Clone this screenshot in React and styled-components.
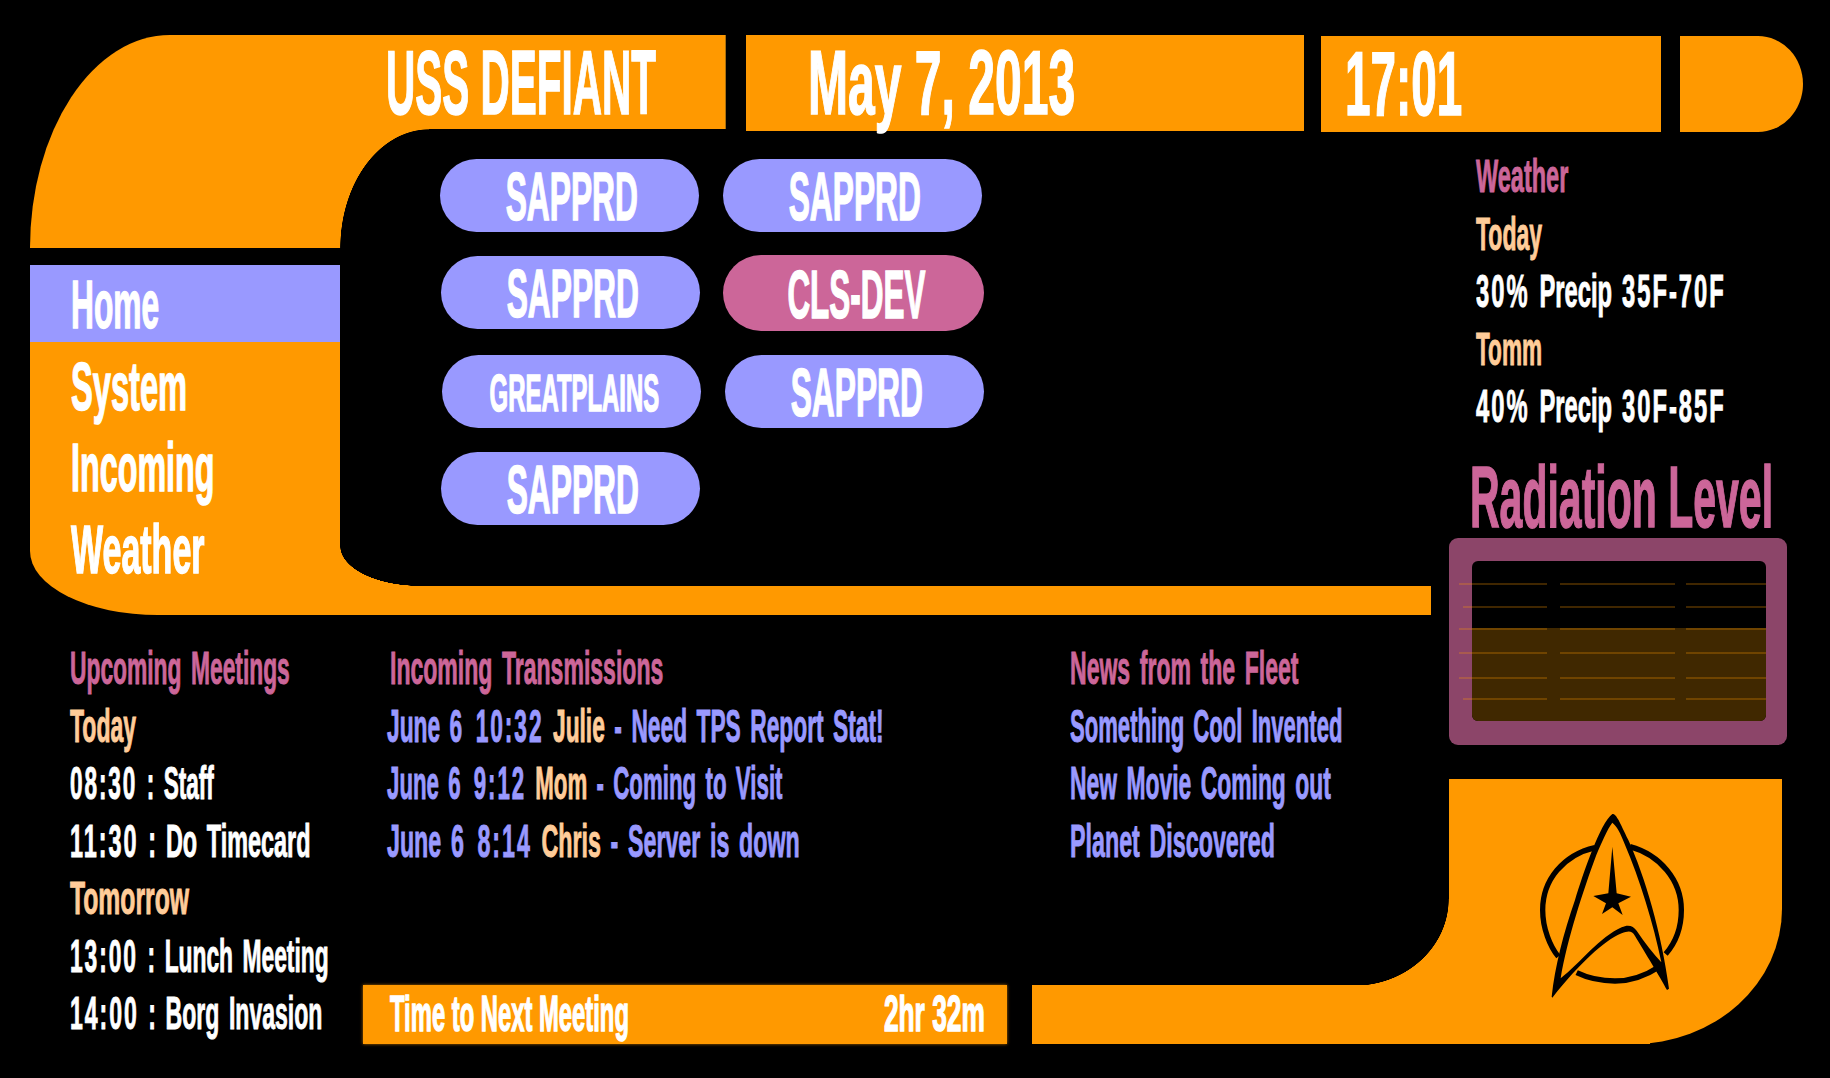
import React from 'react';
import styled, { createGlobalStyle } from 'styled-components';

const ORANGE = '#ff9900';
const PINK = '#cc6699';
const LAVENDER = '#9999ff';
const PEACH = '#ffcc99';

const GlobalStyle = createGlobalStyle`
  html, body {
    margin: 0;
    background: #000;
  }
  * {
    box-sizing: border-box;
  }
`;

const Page = styled.div`
  width: 1830px;
  height: 1078px;
  overflow: hidden;
  background: #000;
  padding: 35px 0 0 30px;
  display: grid;
  grid-template-columns: 310px 1109px 1fr;
  grid-template-rows: 97px 483px 429px;
  font-family: "Liberation Sans", Arial, sans-serif;
  font-weight: 700;
  color: #fff;
`;

// the whole screen uses one very condensed face, so text gets squeezed sideways
const Squeezed = styled.span`
  display: inline-block;
  white-space: nowrap;
  font-size: ${p => p.$size}px;
  -webkit-text-stroke: 1.5px currentColor;
  transform: scaleX(${p => p.$sx});
  transform-origin: ${p => p.$origin || 'left'} center;
`;

const Rail = styled.div`
  grid-column: 1;
  grid-row: 1 / span 2;
  display: flex;
  flex-direction: column;
  gap: 17px;
`;

const RailCap = styled.div`
  position: relative;
  height: 213px;
  background: ${ORANGE};
  border-top-left-radius: 140px 213px;

  &::after {
    content: '';
    position: absolute;
    left: 100%;
    top: 94px;
    width: 89px;
    height: 119px;
    background: radial-gradient(89px 119px at 100% 100%, transparent 99.4%, ${ORANGE} 100%);
  }
`;

const Nav = styled.nav`
  position: relative;
  height: 350px;
  background: ${ORANGE};
  border-bottom-left-radius: 128px 64px;
  display: flex;
  flex-direction: column;
  gap: 4.5px;

  &::after {
    content: '';
    position: absolute;
    left: 100%;
    bottom: 29px;
    width: 80px;
    height: 40px;
    background: radial-gradient(80px 40px at 100% 0, transparent 99.4%, ${ORANGE} 100%);
  }
`;

const NavItem = styled.div`
  height: 77px;
  line-height: 78px;
  padding-left: 41px;
  background: ${p => (p.$active ? LAVENDER : 'transparent')};
`;

const Header = styled.header`
  grid-column: 2 / span 2;
  grid-row: 1;
  display: flex;
  align-items: flex-start;
`;

const HeaderBar = styled.div`
  width: ${p => p.$width}px;
  height: ${p => p.$height}px;
  margin: ${p => p.$top || 0}px ${p => p.$gap || 0}px 0 0;
  padding-left: ${p => p.$pad || 0}px;
  background: ${ORANGE};
  line-height: 96px;
`;

const TitleBar = styled(HeaderBar)`
  border-right: 1px solid #a86e0c;
`;

const EndCap = styled.div`
  width: 123px;
  height: 96px;
  margin-top: 1px;
  background: ${ORANGE};
  border-top-right-radius: 45px 48px;
  border-bottom-right-radius: 45px 48px;
`;

const Main = styled.main`
  grid-column: 2;
  grid-row: 2;
  display: flex;
  flex-direction: column;
  padding-top: 27px;
`;

const ServerGrid = styled.div`
  display: grid;
  grid-template-columns: 259px 259px;
  column-gap: 24px;
  row-gap: 24px;
  padding-left: 100px;
  align-items: start;
`;

const Pill = styled.div`
  width: ${p => (p.$alert ? 261 : 259)}px;
  height: ${p => (p.$alert ? 76 : 73)}px;
  margin: ${p => p.$dy || 0}px 0 ${p => (p.$alert ? -2 : 0)}px ${p => p.$dx || 0}px;
  padding: 2px 0 0 5px;
  border-radius: 38px;
  background: ${p => (p.$alert ? PINK : LAVENDER)};
  display: flex;
  align-items: center;
  justify-content: center;
`;

const BottomBar = styled.div`
  margin-top: auto;
  width: 1091px;
  height: 29px;
  background: ${ORANGE};
`;

const Side = styled.aside`
  grid-column: 3;
  grid-row: 2 / span 2;
  display: flex;
  flex-direction: column;
  align-items: flex-start;
`;

const SideList = styled.div`
  flex: none;
  padding: 15px 0 1px 27px;
`;

const Line = styled.div`
  height: 57.5px;
  line-height: 57.5px;
  margin-left: ${p => p.$indent || 0}px;
  font-size: 47px;
  word-spacing: 0.14em;
  white-space: nowrap;
  -webkit-text-stroke: 1px currentColor;
  color: ${p => p.$tone || '#fff'};
  transform: scaleX(${p => p.$sx || 0.49});
  transform-origin: left center;
`;

const Peach = styled.span`
  color: ${PEACH};
`;

// digits run wider than letters on this screen
const Num = styled.span`
  letter-spacing: 0.085em;
`;

const RadiationTitle = styled.div`
  flex: none;
  height: 83px;
  margin-top: 19px;
  padding-left: 21px;
  line-height: 84px;
  color: ${PINK};
`;

const RadiationFrame = styled.div`
  position: relative;
  flex: none;
  width: 338px;
  height: 207px;
  padding: 23px 21px 24px 23px;
  background: #8c4569;
  border-radius: 9px;
`;

const RadiationWell = styled.div`
  height: 100%;
  border-radius: 6px;
  overflow: hidden;
  background: #000;
  display: flex;
  flex-direction: column;
  justify-content: flex-end;
`;

const RadiationFill = styled.div`
  background: #402800;
`;

const Tick = styled.div`
  position: absolute;
  left: ${p => p.$left}px;
  right: 21px;
  height: 2px;
  background: linear-gradient(
    to right,
    rgba(255, 153, 0, 0.25) ${p => 98 - p.$left}px,
    transparent ${p => 98 - p.$left}px,
    transparent ${p => 111 - p.$left}px,
    rgba(255, 153, 0, 0.25) ${p => 111 - p.$left}px,
    rgba(255, 153, 0, 0.25) ${p => 226 - p.$left}px,
    transparent ${p => 226 - p.$left}px,
    transparent ${p => 237 - p.$left}px,
    rgba(255, 153, 0, 0.25) ${p => 237 - p.$left}px
  );
`;

const Elbow = styled.div`
  position: relative;
  flex: none;
  width: 333px;
  height: 265px;
  margin-top: 34px;
  padding: 21px 0 0 71px;
  background: ${ORANGE};
  border-bottom-right-radius: 149px 135px;

  &::before {
    content: '';
    position: absolute;
    right: 100%;
    bottom: 58px;
    width: 95px;
    height: 87px;
    background: radial-gradient(95px 87px at 0 0, transparent 99.4%, ${ORANGE} 100%);
  }
`;

const Lower = styled.section`
  grid-column: 1 / span 2;
  grid-row: 3;
  display: flex;
  padding-top: 24px;
`;

const Meetings = styled.div`
  flex: none;
  width: 333px;
  padding-left: 40px;
`;

const LowerRight = styled.div`
  flex: 1;
  display: flex;
  flex-direction: column;
`;

const Feeds = styled.div`
  display: flex;
`;

const Transmissions = styled.div`
  width: 707px;
  padding-left: 24px;
`;

const BarRow = styled.div`
  margin-top: auto;
  display: flex;
  gap: 25px;
  height: 59px;
`;

const NextMeeting = styled.div`
  flex: none;
  width: 644px;
  padding: 0 22px 0 27px;
  background: ${ORANGE};
  box-shadow: 0 0 3px rgba(255, 153, 0, 0.7);
  display: flex;
  line-height: 58px;
`;

const NextMeetingName = styled.div`
  flex: 1;
  min-width: 0;
`;

const FootBar = styled.div`
  flex: 1;
  background: ${ORANGE};
`;

const navItems = [
  { label: 'Home', sx: 0.466, active: true },
  { label: 'System', sx: 0.48 },
  { label: 'Incoming', sx: 0.475 },
  { label: 'Weather', sx: 0.5 },
];

const servers = [
  { name: 'SAPPRD' },
  { name: 'SAPPRD' },
  { name: 'SAPPRD', dx: 1 },
  { name: 'CLS-DEV', alert: true, dy: -1, sx: 0.456 },
  { name: 'GREATPLAINS', dx: 2, dy: 2, size: 52 },
  { name: 'SAPPRD', dx: 2, dy: 2 },
  { name: 'SAPPRD', dx: 1 },
];

const ticks = [
  { top: 45, left: 10 },
  { top: 68, left: 14 },
  { top: 90, left: 10 },
  { top: 114, left: 10 },
  { top: 139, left: 10 },
  { top: 160, left: 14 },
];

function DeltaLogo() {
  return (
    <svg width="180" height="210" viewBox="0 0 540 630">
      <g fill="none" stroke="#000" strokeWidth="16">
        <path d="M225 143C130 165 68 240 68 330C68 385 90 440 115 470" />
        <path d="M330 140C420 165 484 240 484 330C484 385 465 430 437 462" />
        <path d="M170 518C205 535 240 543 285 543C335 543 380 525 418 500" />
      </g>
      <path
        fillRule="evenodd"
        d="M277 42C290 42 298 65 325 120C375 230 425 400 447 566L441 570C420 530 375 458 345 408C335 391 325 393 305 400C250 423 180 490 97 593L95 590C105 500 130 400 165 300C190 220 240 70 277 42ZM277 68C262 87 244 130 229 165C190 270 141 420 122 535C180 490 240 410 305 382C325 372 340 378 350 392C375 430 400 460 424 487C400 370 360 240 313 130C302 100 290 78 277 68Z"
      />
      <path d="M277 140L290 280L333 290L295 310L308 345L277 322L246 342L258 310L220 288L265 280Z" />
    </svg>
  );
}

export default function App() {
  return (
    <Page>
      <GlobalStyle />

      <Rail>
        <RailCap />
        <Nav>
          {navItems.map(item => (
            <NavItem key={item.label} $active={item.active}>
              <Squeezed $size={68} $sx={item.sx}>{item.label}</Squeezed>
            </NavItem>
          ))}
        </Nav>
      </Rail>

      <Header>
        <TitleBar $width={386} $height={94} $gap={20} $pad={46}>
          <Squeezed $size={90} $sx={0.45}>USS DEFIANT</Squeezed>
        </TitleBar>
        <HeaderBar $width={558} $height={96} $gap={17} $pad={62}>
          <Squeezed $size={90} $sx={0.534}>May 7, 2013</Squeezed>
        </HeaderBar>
        <HeaderBar $width={340} $height={96} $top={1} $gap={19} $pad={24}>
          <Squeezed $size={90} $sx={0.51}>17:01</Squeezed>
        </HeaderBar>
        <EndCap />
      </Header>

      <Main>
        <ServerGrid>
          {servers.map((s, i) => (
            <Pill key={i} $alert={s.alert} $dx={s.dx} $dy={s.dy}>
              <Squeezed $size={s.size || 69} $sx={s.sx || 0.46} $origin="center">{s.name}</Squeezed>
            </Pill>
          ))}
        </ServerGrid>
        <BottomBar />
      </Main>

      <Side>
        <SideList>
          <Line $tone={PINK} $sx={0.5}>Weather</Line>
          <Line $tone={PEACH}>Today</Line>
          <Line $sx={0.505}><Num>30%</Num> Precip <Num>35F-70F</Num></Line>
          <Line $tone={PEACH} $sx={0.48}>Tomm</Line>
          <Line $sx={0.505}><Num>40%</Num> Precip <Num>30F-85F</Num></Line>
        </SideList>
        <RadiationTitle>
          <Squeezed $size={88} $sx={0.466}>Radiation Level</Squeezed>
        </RadiationTitle>
        <RadiationFrame>
          <RadiationWell>
            <RadiationFill style={{ height: '58%' }} />
          </RadiationWell>
          {ticks.map(t => (
            <Tick key={t.top} $left={t.left} style={{ top: t.top }} />
          ))}
        </RadiationFrame>
        <Elbow>
          <DeltaLogo />
        </Elbow>
      </Side>

      <Lower>
        <Meetings>
          <Line $tone={PINK} $sx={0.485}>Upcoming Meetings</Line>
          <Line $tone={PEACH}>Today</Line>
          <Line $sx={0.48}><Num>08:30</Num> : Staff</Line>
          <Line $sx={0.498}><Num>11:30</Num> : Do Timecard</Line>
          <Line $tone={PEACH} $sx={0.526}>Tomorrow</Line>
          <Line $sx={0.485}><Num>13:00</Num> : Lunch Meeting</Line>
          <Line><Num>14:00</Num> : Borg Invasion</Line>
        </Meetings>
        <LowerRight>
          <Feeds>
            <Transmissions>
              <Line $tone={PINK} $indent={3}>Incoming Transmissions</Line>
              <Line $tone={LAVENDER} $sx={0.484}>June <Num>6 10:32</Num> <Peach>Julie</Peach> - Need TPS Report Stat!</Line>
              <Line $tone={LAVENDER} $sx={0.474}>June <Num>6 9:12</Num> <Peach>Mom</Peach> - Coming to Visit</Line>
              <Line $tone={LAVENDER} $sx={0.494}>June <Num>6 8:14</Num> <Peach>Chris</Peach> - Server is down</Line>
            </Transmissions>
            <div>
              <Line $tone={PINK}>News from the Fleet</Line>
              <Line $tone={LAVENDER} $sx={0.47}>Something Cool Invented</Line>
              <Line $tone={LAVENDER} $sx={0.486}>New Movie Coming out</Line>
              <Line $tone={LAVENDER} $sx={0.495}>Planet Discovered</Line>
            </div>
          </Feeds>
          <BarRow>
            <NextMeeting>
              <NextMeetingName>
                <Squeezed $size={50} $sx={0.476}>Time to Next Meeting</Squeezed>
              </NextMeetingName>
              <Squeezed $size={50} $sx={0.526} $origin="right">2hr 32m</Squeezed>
            </NextMeeting>
            <FootBar />
          </BarRow>
        </LowerRight>
      </Lower>
    </Page>
  );
}
